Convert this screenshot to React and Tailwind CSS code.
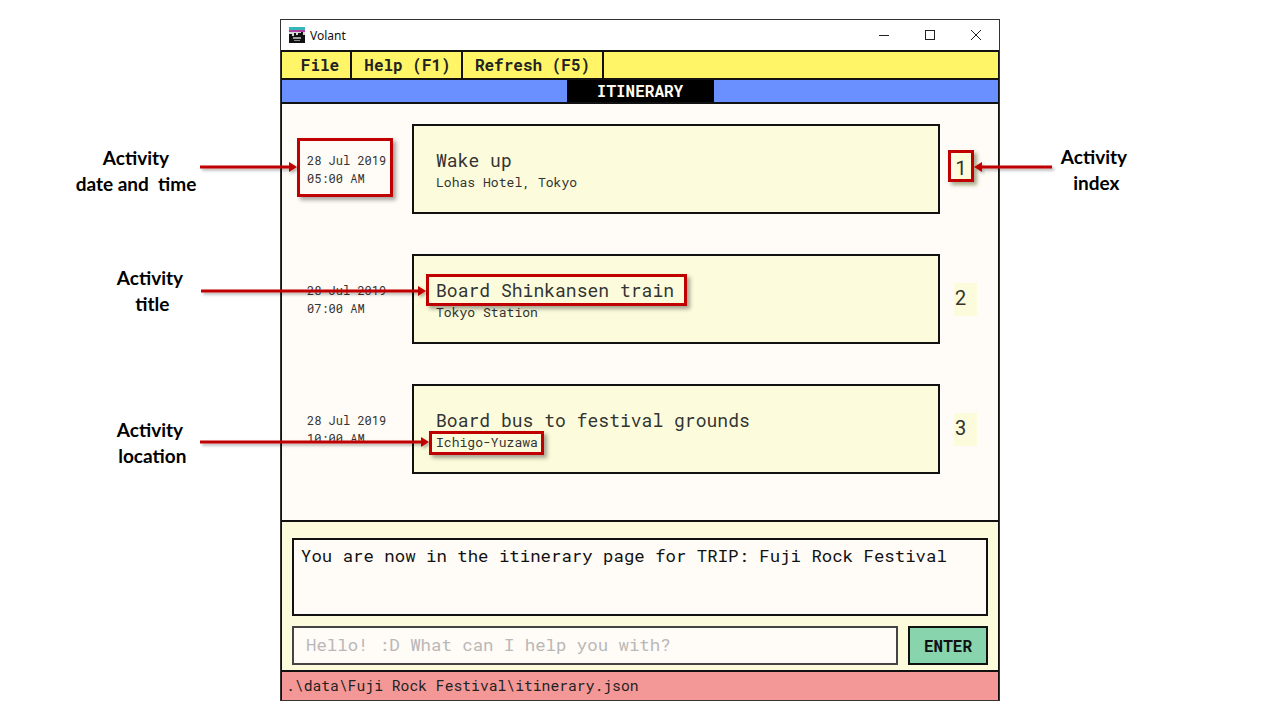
const mono = "font-['Roboto_Mono','DejaVu_Sans_Mono','Liberation_Mono',monospace]";

const activities = [
  { date: "28 Jul 2019", time: "05:00 AM", title: "Wake up", place: "Lohas Hotel, Tokyo", idx: 1 },
  { date: "28 Jul 2019", time: "07:00 AM", title: "Board Shinkansen train", place: "Tokyo Station", idx: 2 },
  { date: "28 Jul 2019", time: "10:00 AM", title: "Board bus to festival grounds", place: "Ichigo-Yuzawa", idx: 3 },
];

function AppIcon() {
  return (
    <svg width="16" height="16" viewBox="0 0 16 16" className="shrink-0">
      <rect width="16" height="16" fill="#d8d8d8" />
      <rect width="16" height="3" fill="#35b8b8" />
      <rect y="3" width="16" height="2" fill="#b03fa0" />
      <path d="M0 16V7h3v2h2V6h2v2h2V6h3v-1h2v3h2v8z" fill="#111" />
      <rect x="4" y="10" width="8" height="2" fill="#ddd" opacity="0.7" />
      <rect x="5" y="13" width="6" height="1" fill="#ddd" opacity="0.6" />
    </svg>
  );
}

function Row({ a }) {
  return (
    <div className="flex items-center h-[90px]">
      <div className="w-[130px] pl-[25px] text-[12px] leading-[18px] text-[#333] shrink-0">
        <div>{a.date}</div>
        <div>{a.time}</div>
      </div>
      <div className="w-[528px] h-[90px] shrink-0 border-2 border-[#111] bg-[#fcfcdc] pl-[22px] pt-[20px]">
        <div className="text-[18.05px] leading-[28px] text-[#333]">{a.title}</div>
        <div className="text-[13.07px] leading-[16px] text-[#333]">{a.place}</div>
      </div>
      <div className="ml-[14px] w-[23px] h-[33px] bg-[#fcfcdc] flex items-center pl-[1px] pb-[4px] text-[20px] text-[#333]">
        {a.idx}
      </div>
    </div>
  );
}

function Label({ className, lines }) {
  return (
    <div className={"absolute -translate-x-1/2 text-center whitespace-pre font-['Lato','Noto_Sans',sans-serif] font-bold text-[19px] leading-[26px] text-black " + className}>
      {lines.map((l) => (
        <div key={l}>{l}</div>
      ))}
    </div>
  );
}

function RedBox({ className }) {
  return <div className={"absolute border-[3px] border-[#c00000] shadow-[3px_3px_4px_rgba(0,0,0,0.35)] " + className} />;
}

function Arrows() {
  const arrows = [
    { x1: 200, x2: 297, y: 167 },
    { x1: 201, x2: 426, y: 291 },
    { x1: 200, x2: 429, y: 442 },
    { x1: 1052, x2: 974, y: 167 },
  ];
  return (
    <svg className="absolute left-0 top-0 pointer-events-none" width="1280" height="720" viewBox="0 0 1280 720">
      <defs>
        <filter id="sh" x="-5%" y="-300%" width="110%" height="700%">
          <feDropShadow dx="2" dy="2" stdDeviation="1.5" floodColor="#000" floodOpacity="0.3" />
        </filter>
      </defs>
      {arrows.map((a) => {
        const d = a.x2 > a.x1 ? 1 : -1;
        return (
          <g key={a.x1 + "-" + a.y} filter="url(#sh)">
            <line x1={a.x1} y1={a.y} x2={a.x2 - d * 6} y2={a.y} stroke="#c00000" strokeWidth="3" />
            <polygon points={`${a.x2},${a.y} ${a.x2 - d * 8},${a.y - 5} ${a.x2 - d * 8},${a.y + 5}`} fill="#c00000" />
          </g>
        );
      })}
    </svg>
  );
}

export default function App() {
  return (
    <div className="relative w-[1280px] h-[720px] bg-white overflow-hidden">
      <div className={"ml-[280px] mt-[19px] w-[720px] h-[682px] border border-[#333] bg-white flex flex-col " + mono}>
        <div className="h-[30px] shrink-0 flex items-center pl-[8px] font-['Noto_Sans',sans-serif] text-[12px] text-[#111]">
          <AppIcon />
          <span className="ml-[5px] mt-[1px]">Volant</span>
          <div className="ml-auto flex items-center">
            <svg width="12" height="12" viewBox="0 0 12 12" className="mr-[34px]"><path d="M1 6.5h10" stroke="#222" strokeWidth="1" /></svg>
            <svg width="12" height="12" viewBox="0 0 12 12" className="mr-[34px]"><rect x="1.5" y="1.5" width="9" height="9" fill="none" stroke="#222" strokeWidth="1" /></svg>
            <svg width="12" height="12" viewBox="0 0 12 12" className="mr-[17px]"><path d="M1 1l10 10M11 1L1 11" stroke="#222" strokeWidth="1" /></svg>
          </div>
        </div>
        <div className="flex-1 min-h-0 border-t-[2px] border-x-[1px] border-[#111] flex flex-col">
          <div className="h-[28px] shrink-0 bg-[#fff566] flex border-b-[2px] border-[#111] text-[16px] font-bold text-[#222]">
            <div className="w-[70px] border-r-2 border-[#111] flex items-center justify-center pl-[8px]">File</div>
            <div className="w-[111px] border-r-2 border-[#111] flex items-center justify-center pl-[2px]">Help (F1)</div>
            <div className="w-[141px] border-r-2 border-[#111] flex items-center justify-center">Refresh (F5)</div>
          </div>
          <div className="h-[24px] shrink-0 bg-[#6a8fff] flex justify-center border-b-[2px] border-[#111]">
            <div className="w-[147px] bg-black text-[#fffbf0] text-[16px] font-bold flex items-center justify-center">ITINERARY</div>
          </div>
          <div className="flex-1 min-h-0 bg-[#fffbf6] pt-[20px] flex flex-col gap-[40px] overflow-hidden">
            {activities.map((a) => (
              <Row key={a.idx} a={a} />
            ))}
          </div>
          <div className="h-[150px] shrink-0 bg-[#fcfcdc] border-t-[2px] border-[#111] px-[10px] pt-[16px]">
            <div className="h-[78px] border-2 border-[#111] bg-[#fffbf6] px-[7px] pt-[3px] text-[17.36px] leading-[26px] text-[#111]">
              You are now in the itinerary page for TRIP: Fuji Rock Festival
            </div>
            <div className="mt-[10px] flex gap-[10px]">
              <div className="w-[606px] h-[39px] border-2 border-[#444] bg-[#fffbf6] pl-[12px] flex items-center text-[17.36px] text-[#b8b8b8]">
                Hello! :D What can I help you with?
              </div>
              <div className="w-[80px] h-[39px] border-2 border-[#111] bg-[#88d4ad] flex items-center justify-center text-[16px] font-bold text-[#111]">
                ENTER
              </div>
            </div>
          </div>
          <div className="h-[30px] shrink-0 bg-[#f49797] border-t-[2px] border-[#111] pl-[4px] flex items-center text-[14.7px] text-[#222]">
            .\data\Fuji Rock Festival\itinerary.json
          </div>
        </div>
      </div>

      <RedBox className="left-[297px] top-[138px] w-[96px] h-[59px]" />
      <RedBox className="left-[948px] top-[150px] w-[26px] h-[32px]" />
      <RedBox className="left-[426px] top-[274px] w-[261px] h-[32px]" />
      <RedBox className="left-[429px] top-[431px] w-[115px] h-[24px]" />
      <Arrows />
      <Label className="left-[136px] top-[145px]" lines={["Activity", "date and  time"]} />
      <Label className="left-[150px] top-[265px]" lines={["Activity", " title"]} />
      <Label className="left-[150px] top-[417px]" lines={["Activity", " location"]} />
      <Label className="left-[1094px] top-[144px]" lines={["Activity", " index"]} />
    </div>
  );
}
